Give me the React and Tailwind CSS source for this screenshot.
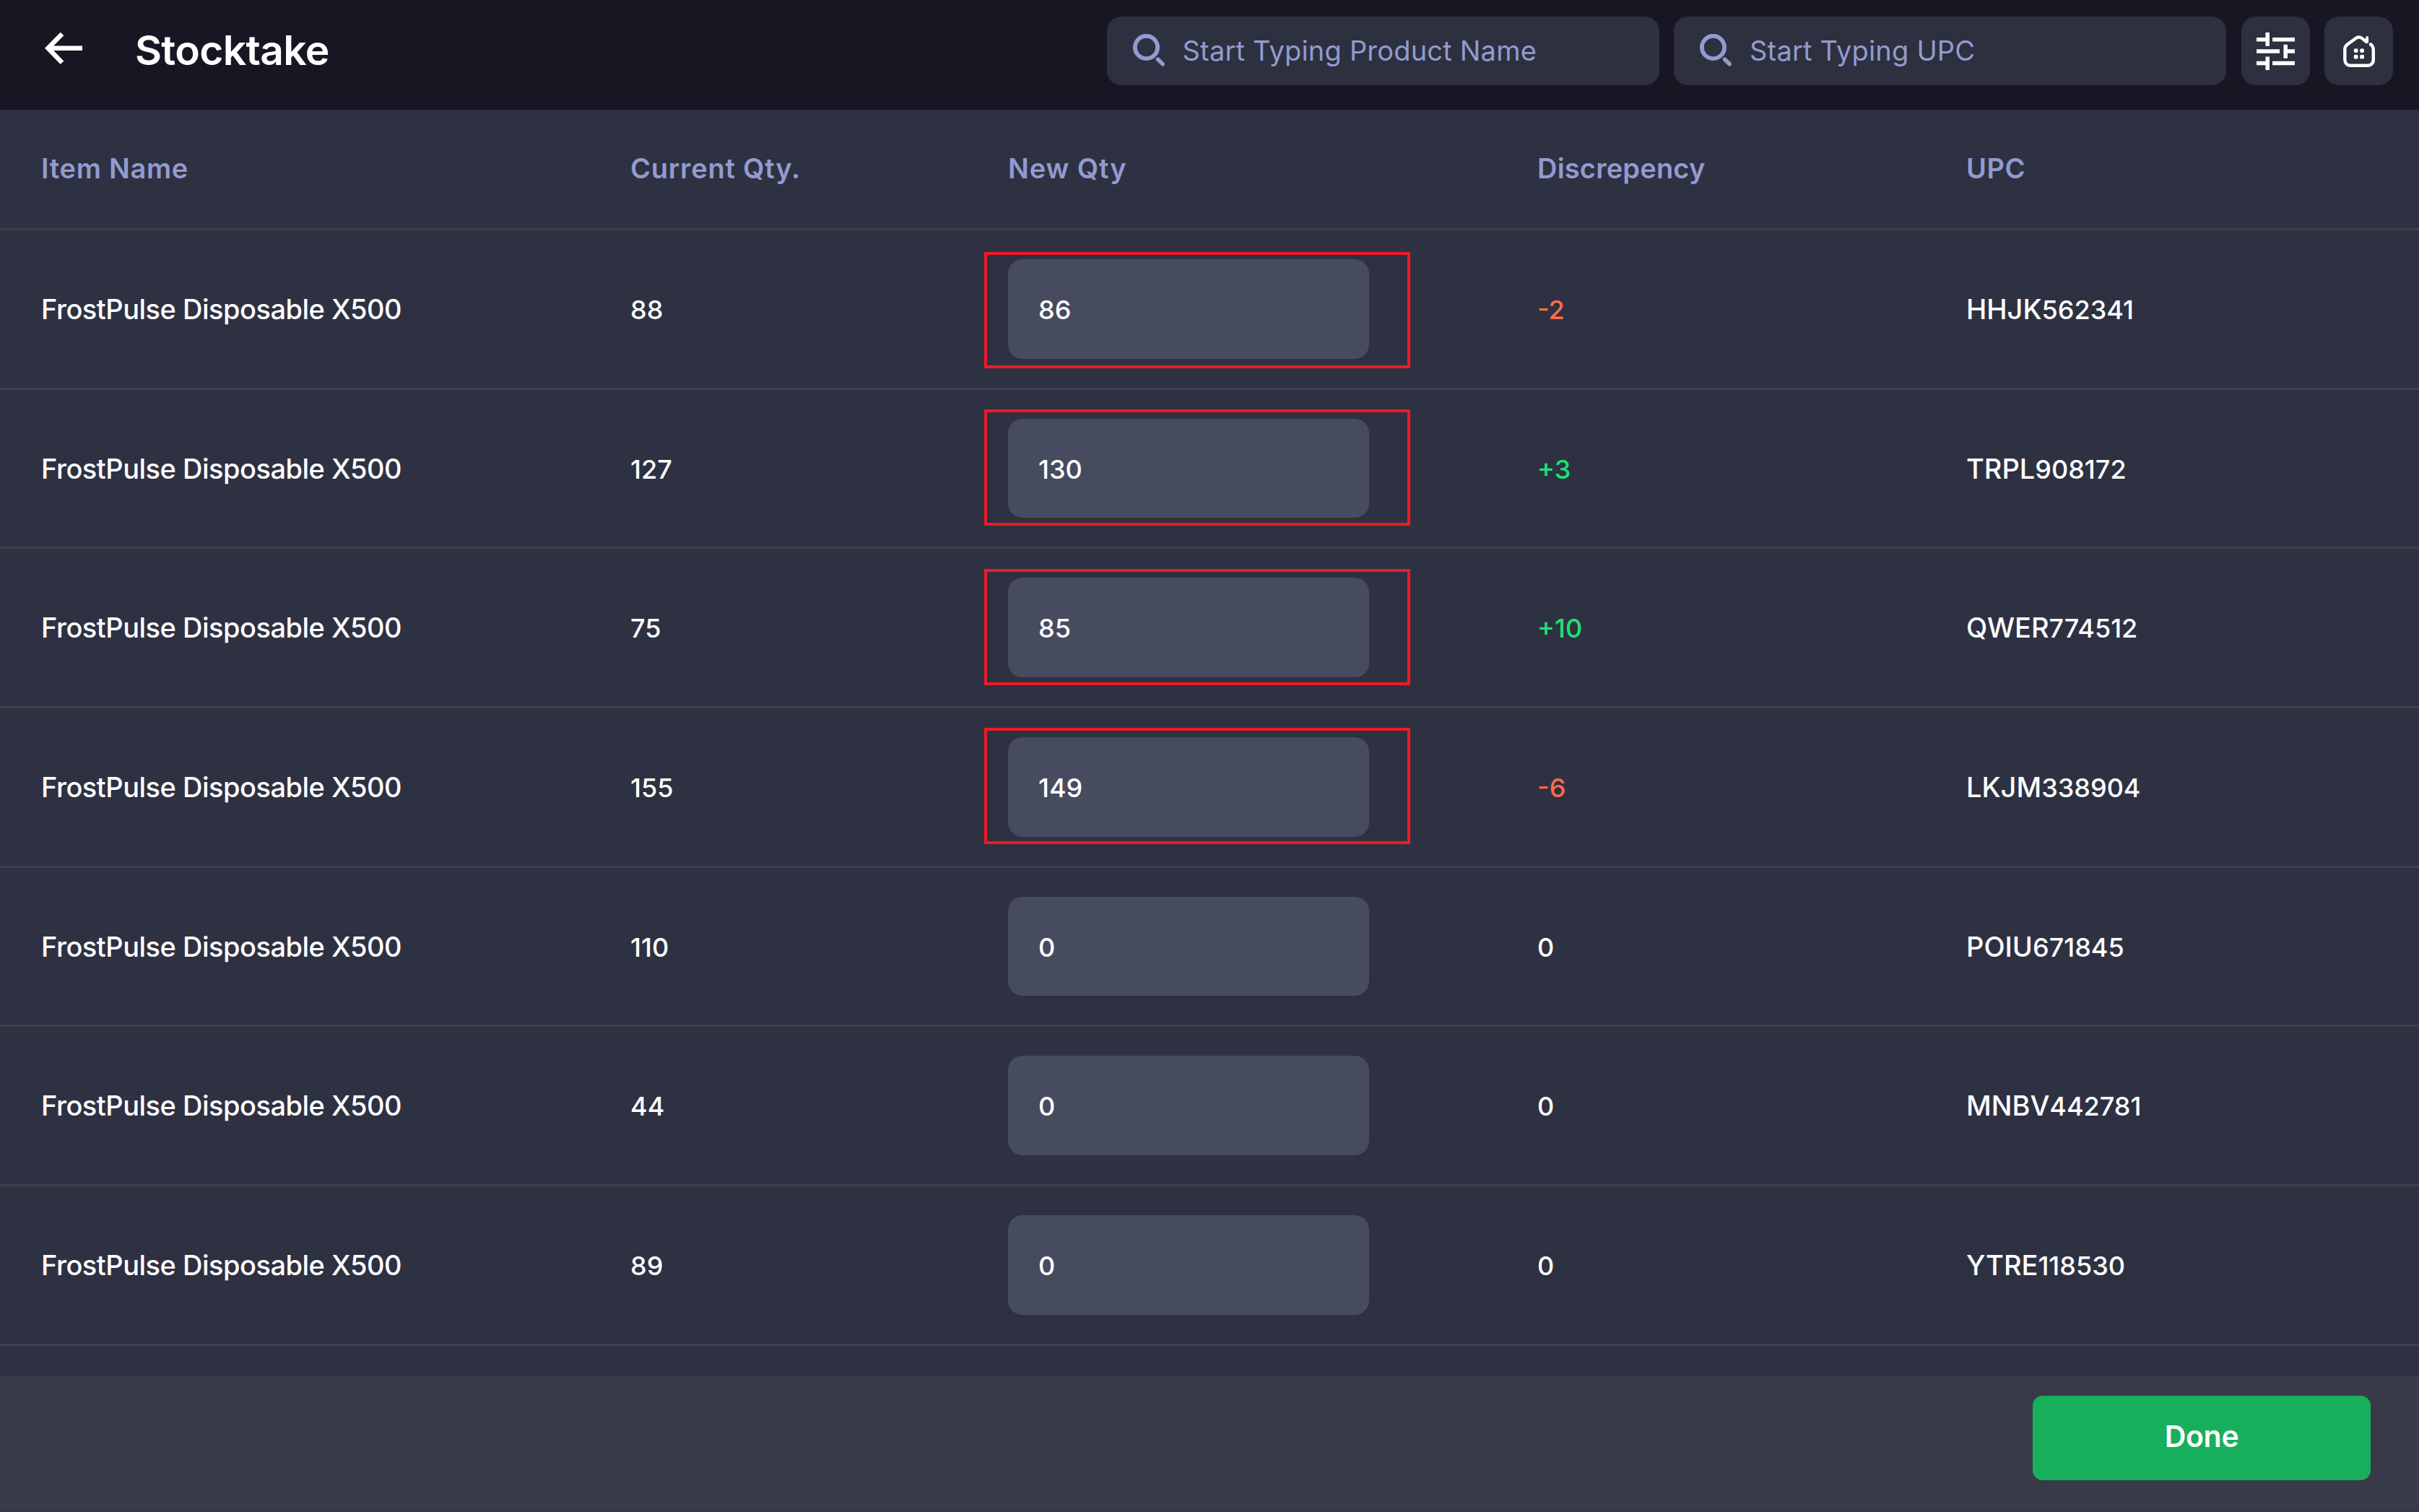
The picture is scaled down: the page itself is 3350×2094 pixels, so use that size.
import { useState } from 'react';

// mark: vertical position of the highlight box round the edited quantity
const initialItems = [
  { name: 'FrostPulse Disposable X500', qty: 88, newQty: 86, diff: -2, upc: 'HHJK', code: '562341', mark: '-top-[10px]' },
  { name: 'FrostPulse Disposable X500', qty: 127, newQty: 130, diff: 3, upc: 'TRPL', code: '908172', mark: '-top-[13px]' },
  { name: 'FrostPulse Disposable X500', qty: 75, newQty: 85, diff: 10, upc: 'QWER', code: '774512', mark: '-top-[12px]' },
  { name: 'FrostPulse Disposable X500', qty: 155, newQty: 149, diff: -6, upc: 'LKJM', code: '338904', mark: '-top-[13px]' },
  { name: 'FrostPulse Disposable X500', qty: 110, newQty: 0, diff: 0, upc: 'POIU', code: '671845' },
  { name: 'FrostPulse Disposable X500', qty: 44, newQty: 0, diff: 0, upc: 'MNBV', code: '442781' },
  { name: 'FrostPulse Disposable X500', qty: 89, newQty: 0, diff: 0, upc: 'YTRE', code: '118530' },
];

const columns = 'grid grid-cols-[816px_523px_733px_593px_1fr] items-center pl-[57px]';

function BackIcon() {
  return (
    <svg width="52" height="44" viewBox="0 0 52 44" fill="none" stroke="currentColor" strokeWidth="6.5">
      <path d="M24 2L4.5 21.7L24 41.7M5 21.7H52" />
    </svg>
  );
}

function SearchIcon() {
  return (
    <svg width="46" height="46" viewBox="0 0 46 46" fill="none" stroke="currentColor" strokeLinecap="round">
      <circle cx="18.5" cy="18.5" r="15.6" strokeWidth="5.8" />
      <path d="M34.6 35.2L41.2 41.8" strokeWidth="5.6" />
    </svg>
  );
}

function FilterIcon() {
  return (
    <svg width="53" height="52" viewBox="0 0 53 52" fill="none" stroke="currentColor" strokeWidth="5.5">
      <path d="M0 9.8H15M15.2 0V18.7M22 9.8H53" />
      <path d="M0 26H32M40.2 16.7V35.7M40 26H53" />
      <path d="M0 42.4H15M15.2 33.4V52M22 42.4H53" />
    </svg>
  );
}

function HomeIcon() {
  return (
    <svg width="44" height="44" viewBox="0 0 44 44" fill="none" stroke="currentColor" strokeWidth="4.4" strokeLinecap="round" strokeLinejoin="round">
      <path d="M32 8.8L26.5 4.4C23.5 2 20 2 17.2 4.2L5.8 12.6C3.2 14.6 2.3 16.8 2.3 19.8V33.5C2.3 38.5 5.5 41.8 10.5 41.8H33.5C38.5 41.8 41.8 38.5 41.8 33.5V20C41.8 16.5 40.6 14.2 38 12.4" />
      <path d="M33.2 3V9L29.8 6.6" strokeWidth="3.8" />
      <g fill="currentColor" stroke="none">
        <rect x="14.8" y="18.2" width="5.8" height="5.8" rx="2.2" />
        <rect x="23.2" y="18.2" width="5.8" height="5.8" rx="2.2" />
        <rect x="14.8" y="26.8" width="5.8" height="5.8" rx="2.2" />
        <rect x="23.2" y="26.8" width="5.8" height="5.8" rx="2.2" />
      </g>
    </svg>
  );
}

function SearchBox({ label }) {
  return (
    <div className="flex h-[95px] w-[765px] items-center rounded-[20px] bg-[#2d303e] pb-[1px] pl-9 text-[#929bd0]">
      <SearchIcon />
      <span className="ml-[23px] text-[38px] tracking-[0.2px]">{label}</span>
    </div>
  );
}

function App() {
  const [items] = useState(initialItems);

  const diffColor = (diff) => {
    if (diff < 0) return 'text-[#ff6b4a]';
    if (diff > 0) return 'text-[#1ee078]';
    return 'text-white';
  };

  return (
    <div className="flex h-[2094px] w-[3350px] flex-col overflow-hidden bg-[#2e3142] font-['Inter',sans-serif] text-white">
      {/* Top bar */}
      <header className="flex h-[152px] shrink-0 items-center justify-between bg-[#191624] pr-9 pb-[11px] pl-[62px]">
        <div className="flex items-center pb-[2px]">
          <button type="button" className="pb-[5px]"><BackIcon /></button>
          <h1 className="ml-[73px] text-[57px] font-semibold tracking-[-0.7px]">Stocktake</h1>
        </div>
        <div className="flex items-center gap-[20.5px]">
          <SearchBox label="Start Typing Product Name" />
          <SearchBox label="Start Typing UPC" />
          <button type="button" className="flex size-[95px] items-center justify-center rounded-[20px] bg-[#2d303e]"><FilterIcon /></button>
          <button type="button" className="flex size-[95px] items-center justify-center rounded-[20px] bg-[#2d303e]"><HomeIcon /></button>
        </div>
      </header>

      {/* Items */}
      <main className="grow">
        <div className={`${columns} h-[167px] border-b-3 border-[#3d3f4c] pb-[1px] text-[38px] font-semibold text-[#929bd0]`}>
          <span className="tracking-[0.7px]">Item Name</span>
          <span className="tracking-[0.8px]">Current Qty.</span>
          <span className="tracking-[0.9px]">New Qty</span>
          <span className="tracking-[0.2px]">Discrepency</span>
          <span className="pl-px tracking-[0.5px]">UPC</span>
        </div>
        {items.map((item) => (
          <div key={item.upc} className={`${columns} h-[220.7px] border-b-3 border-[#3d3f4c] text-[36px] font-medium`}>
            <span className="pt-px text-[38px] tracking-[-0.5px]">{item.name}</span>
            <span className="pt-[2px]">{item.qty}</span>
            <div className="relative flex h-[137.6px] w-[500px] items-center rounded-[20px] bg-[#474b60] pt-[2px] pl-[42px]">
              {item.newQty}
              {item.mark && <div className={`absolute -left-[33px] h-[161px] w-[590px] border-4 border-[#ed1c24] ${item.mark}`} />}
            </div>
            <span className={`pt-[2px] ${diffColor(item.diff)}`}>{item.diff > 0 ? `+${item.diff}` : item.diff}</span>
            <span className="pt-px pl-px text-[38px]">{item.upc}<span className="text-[36px]">{item.code}</span></span>
          </div>
        ))}
      </main>

      {/* Footer */}
      <footer className="mb-px flex h-[188px] shrink-0 items-start justify-end bg-[#393a49] pt-[28px] pr-[67px]">
        <button type="button" className="h-[117px] w-[468px] rounded-[14px] bg-[#18af5c] pb-[3px] text-[41px] font-semibold tracking-[-0.3px]">Done</button>
      </footer>
    </div>
  );
}

export default App;
